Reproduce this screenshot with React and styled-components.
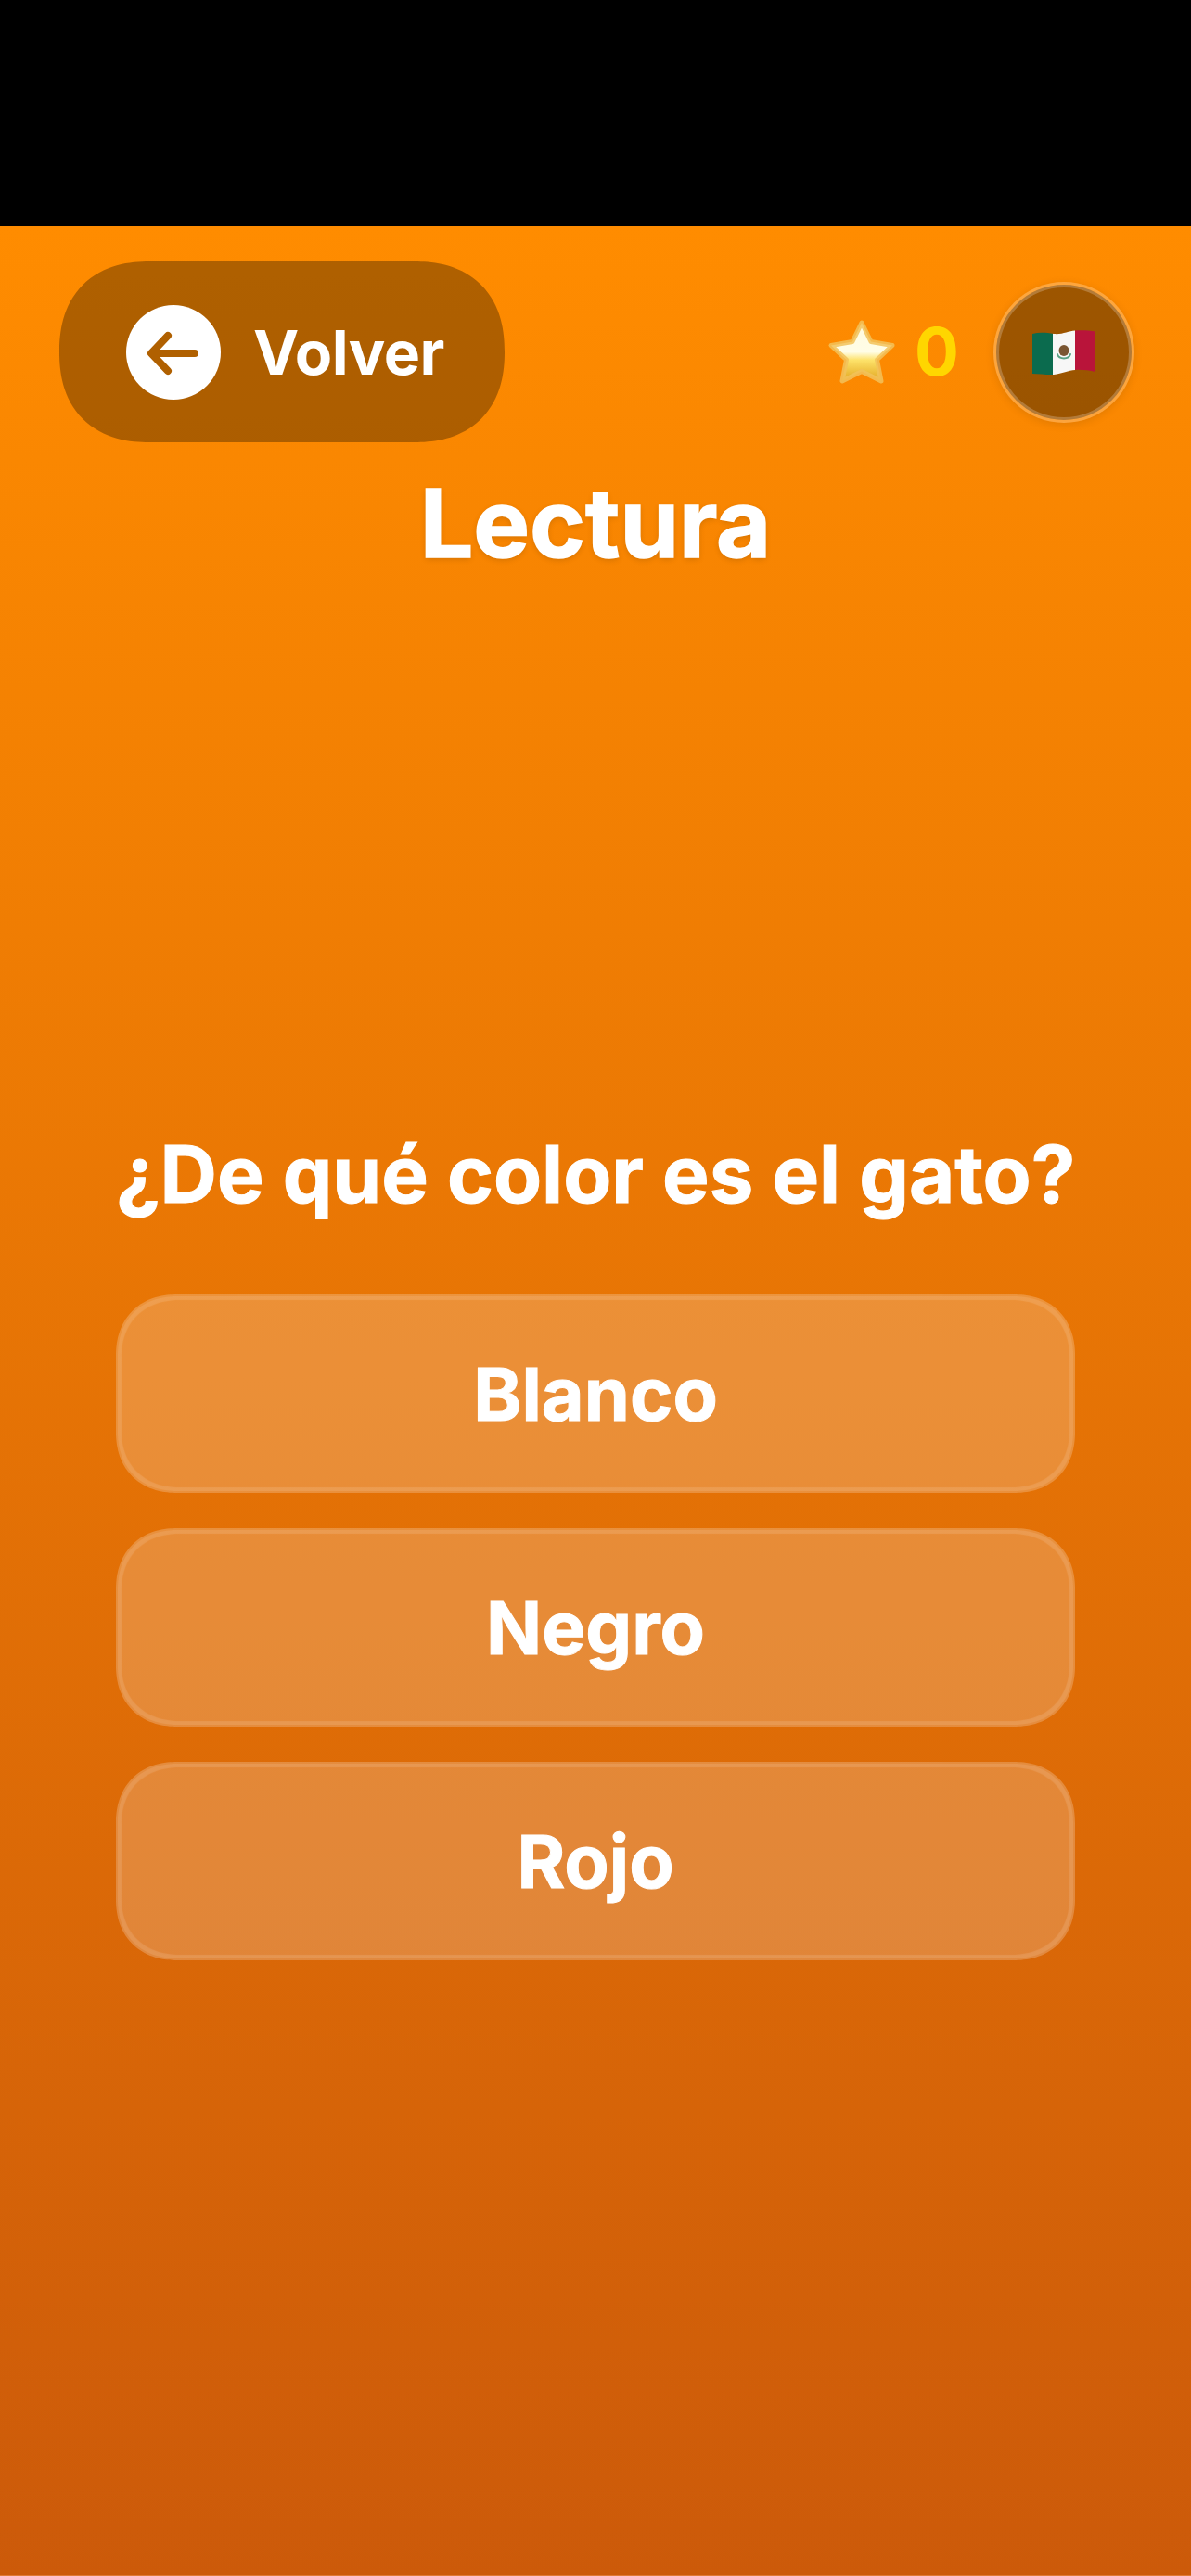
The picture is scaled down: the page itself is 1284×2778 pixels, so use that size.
import React from "react";
import styled, { createGlobalStyle } from "styled-components";

const GlobalStyle = createGlobalStyle`
  html, body {
    margin: 0;
    padding: 0;
    background: #000;
  }
  * {
    box-sizing: border-box;
  }
`;

const Page = styled.div`
  width: 1284px;
  height: 2778px;
  display: flex;
  flex-direction: column;
  overflow: hidden;
  font-family: Inter, "Noto Sans", sans-serif;
  color: #fff;
`;

const StatusBar = styled.div`
  height: 244px;
  flex: none;
  background: #000;
`;

const Screen = styled.div`
  flex: 1;
  display: flex;
  flex-direction: column;
  background: linear-gradient(180deg, #ff8c00 0%, #cc5a0a 100%);
  border-bottom: 1px solid #e07a35;
`;

const Header = styled.div`
  height: 195px;
  margin-top: 38px;
  padding: 0 61px 0 64px;
  display: flex;
  align-items: center;
  justify-content: space-between;
`;

const BackButton = styled.button`
  width: 480px;
  height: 195px;
  padding: 0 0 0 72px;
  border: none;
  border-radius: 97px;
  corner-shape: superellipse(1.2);
  background: rgba(0, 0, 0, 0.31);
  display: flex;
  align-items: center;
  gap: 35px;
  color: #fff;
  font-family: inherit;
`;

const BackCircle = styled.span`
  width: 102px;
  height: 102px;
  border-radius: 50%;
  background: #fff;
  display: flex;
  flex: none;
`;

const BackLabel = styled.span`
  font-size: 66px;
  font-weight: 700;
  line-height: 1;
  letter-spacing: -0.5px;
`;

const Stats = styled.div`
  display: flex;
  align-items: center;
`;

const StarIcon = styled.svg`
  width: 76px;
  height: 72px;
  margin-right: 19px;
  flex: none;
`;

const Score = styled.span`
  font-size: 71px;
  font-weight: 700;
  line-height: 1;
  color: #ffd600;
  margin-right: 37px;
`;

const FlagButton = styled.div`
  width: 152px;
  height: 152px;
  border-radius: 50%;
  border: 3px solid rgba(255, 255, 255, 0.24);
  background: rgba(0, 0, 0, 0.38);
  background-clip: padding-box;
  box-shadow: 0 2px 10px rgba(0, 0, 0, 0.1), inset 0 0 0 3px rgba(255, 255, 255, 0.22);
  display: flex;
  align-items: center;
  justify-content: center;
`;

const FlagIcon = styled.svg`
  width: 70px;
  height: 50px;
`;

const Title = styled.h1`
  margin: 25px 0 0;
  font-size: 102px;
  font-weight: 700;
  line-height: 124px;
  text-align: center;
  -webkit-text-stroke: 1.5px #fff;
  text-shadow: 0 2px 6px rgba(0, 0, 0, 0.15);
`;

const Quiz = styled.div`
  margin-top: 589px;
  padding: 0 125px;
  display: flex;
  flex-direction: column;
`;

const Question = styled.h2`
  margin: 0 0 77px;
  font-size: 85px;
  font-weight: 700;
  line-height: 104px;
  text-align: center;
  white-space: nowrap;
  -webkit-text-stroke: 1px #fff;
`;

const Answers = styled.div`
  display: flex;
  flex-direction: column;
  gap: 38px;
`;

const Answer = styled.button`
  height: 214px;
  border: 2px solid rgba(255, 255, 255, 0.03);
  border-radius: 66px;
  corner-shape: superellipse(1.15);
  background: rgba(255, 255, 255, 0.2);
  box-shadow: inset 0 0 1px 4px rgba(255, 255, 255, 0.13);
  color: #fff;
  font-family: inherit;
  font-size: 79px;
  font-weight: 700;
  line-height: 1;
  -webkit-text-stroke: 1px #fff;
`;

function ArrowIcon() {
  return (
    <svg width="102" height="102" viewBox="0 0 102 102" fill="none">
      <path
        d="M74 52H28M45 33L27 52L45 71"
        stroke="#b06000"
        strokeWidth="8"
        strokeLinecap="round"
        strokeLinejoin="round"
      />
    </svg>
  );
}

function Star() {
  return (
    <StarIcon viewBox="0 0 76 72">
      <defs>
        <linearGradient id="starFill" x1="0" y1="0" x2="0" y2="1">
          <stop offset="0" stopColor="#fffbe0" />
          <stop offset="0.5" stopColor="#fffde6" />
          <stop offset="0.64" stopColor="#fde26a" />
          <stop offset="1" stopColor="#e2a51e" />
        </linearGradient>
      </defs>
      <path
        d="M38 4L48 24.5L71 28.5L54.5 44L59 67L38 56.5L17 67L21.5 44L5 28.5L28 24.5Z"
        fill="url(#starFill)"
        stroke="#f2c25a"
        strokeOpacity="0.85"
        strokeWidth="5"
        strokeLinejoin="round"
      />
    </StarIcon>
  );
}

function Flag() {
  return (
    <FlagIcon viewBox="0 0 70 50">
      <defs>
        <clipPath id="flagShape">
          <path d="M1 5C9 3 17 4 24 5C33 6 40 2 47 1.5C55 1 62 1.5 69 2.5V46C62 44.5 54 43.5 47 44C40 44.5 33 48 24 49C17 49.5 9 48 1 48Z" />
        </clipPath>
      </defs>
      <g clipPath="url(#flagShape)">
        <rect x="0" y="0" width="23" height="50" fill="#0b6b4e" />
        <rect x="23" y="0" width="24" height="50" fill="#f7f7f7" />
        <rect x="47" y="0" width="23" height="50" fill="#b9143a" />
      </g>
      <ellipse cx="35" cy="23" rx="5.5" ry="6" fill="#7a5632" />
      <path d="M28 27C30 33 40 33 42 27" fill="none" stroke="#5aa286" strokeWidth="2" strokeLinecap="round" />
    </FlagIcon>
  );
}

export default function App() {
  const options = ["Blanco", "Negro", "Rojo"];

  return (
    <Page>
      <GlobalStyle />
      <StatusBar />
      <Screen>
        <Header>
          <BackButton>
            <BackCircle>
              <ArrowIcon />
            </BackCircle>
            <BackLabel>Volver</BackLabel>
          </BackButton>
          <Stats>
            <Star />
            <Score>0</Score>
            <FlagButton>
              <Flag />
            </FlagButton>
          </Stats>
        </Header>
        <Title>Lectura</Title>
        <Quiz>
          <Question>¿De qué color es el gato?</Question>
          <Answers>
            {options.map((option) => (
              <Answer key={option}>{option}</Answer>
            ))}
          </Answers>
        </Quiz>
      </Screen>
    </Page>
  );
}
